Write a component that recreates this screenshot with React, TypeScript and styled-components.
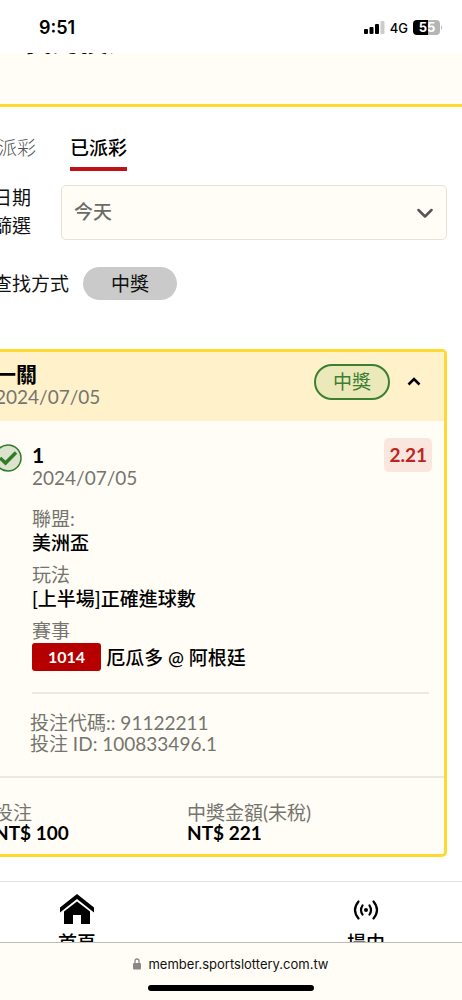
import React from 'react';
import styled, { createGlobalStyle } from 'styled-components';

const GlobalStyle = createGlobalStyle`
  *, *::before, *::after { box-sizing: border-box; }
  body {
    margin: 0;
    background: #fff;
    color: #111;
    font-family: Lato, "Noto Sans CJK TC", sans-serif;
    font-size: 19px;
    line-height: 22px;
    overflow-x: hidden;
  }
  button, select { font: inherit; color: inherit; margin: 0; }
`;

const gray = '#757570';
const cream = '#fffdf5';
const yellow = '#ffd92f';
const line = '#ebe9e3';

const Screen = styled.div`
  overflow: hidden;
`;

const StatusBar = styled.div`
  display: flex;
  align-items: center;
  justify-content: space-between;
  height: 53px;
  padding: 2px 19px 0 39px;
  font-family: Inter, sans-serif;
  color: #000;
`;

const Clock = styled.time`
  font-size: 18px;
  font-weight: 600;
`;

const Signals = styled.div`
  display: flex;
  align-items: center;
  gap: 5px;
  font-size: 13px;
  font-weight: 500;
`;

const TitleBar = styled.header`
  height: 54px;
  overflow: hidden;
  background: ${cream};
  border-bottom: 3px solid ${yellow};
`;

const Title = styled.h1`
  margin: -30px 0 0 24px;
  font-size: 28px;
  line-height: 36px;
  font-weight: 400;
`;

const Page = styled.main`
  margin-left: -22px;
  padding-right: 15px;
`;

const Tabs = styled.div`
  display: flex;
  gap: 34px;
  padding: 27px 0 0 1px;
`;

const Tab = styled.button<{ $active?: boolean }>`
  padding: 0 0 5px;
  border: 0;
  border-bottom: 4px solid ${p => (p.$active ? '#bf1118' : 'transparent')};
  background: none;
  line-height: 28px;
  font-weight: ${p => (p.$active ? 500 : 300)};
  color: ${p => (p.$active ? '#000' : '#555')};
`;

const FilterRow = styled.div<{ $gap: number; $space: number }>`
  display: flex;
  align-items: center;
  gap: ${p => p.$gap}px;
  margin-top: ${p => p.$space}px;
  padding-left: 15px;
`;

const FilterLabel = styled.label`
  width: 38px;
  flex: none;
  line-height: 28px;
`;

const SelectBox = styled.div`
  position: relative;
  flex: 1;
  svg {
    position: absolute;
    right: 14px;
    top: 20px;
    pointer-events: none;
  }
`;

const Select = styled.select`
  display: block;
  width: 100%;
  height: 55px;
  padding: 0 12px;
  appearance: none;
  border: 1px solid #e6e2d6;
  border-radius: 5px;
  background: ${cream};
  color: #6b6b68;
  font-weight: 500;
`;

const Chip = styled.button`
  height: 33px;
  padding: 0 28px;
  border: 0;
  border-radius: 17px;
  background: #cacaca;
`;

const Card = styled.section`
  margin-top: 49px;
  border: 3px solid ${yellow};
  border-radius: 5px;
  background: ${cream};
`;

const CardHead = styled.div`
  display: flex;
  align-items: flex-start;
  padding: 10px 23px 13px 14px;
  background: #fff1ca;
`;

const Grow = styled.div`
  flex: 1;
`;

const Strong = styled.div`
  font-size: 21px;
  line-height: 24px;
  font-weight: 700;
  color: #000;
`;

const Muted = styled.div<{ $line?: number }>`
  color: ${gray};
  line-height: ${p => p.$line ?? 22}px;
`;

const HeadActions = styled.div`
  display: flex;
  align-items: center;
  gap: 17px;
  margin-top: 2px;
`;

const WonBadge = styled.span`
  height: 36px;
  padding: 0 17px;
  border: 2px solid #3d7f31;
  border-radius: 18px;
  background: #ebe8b9;
  color: #3d7f31;
  line-height: 32px;
`;

const Toggle = styled.button`
  display: flex;
  padding: 0;
  border: 0;
  background: none;
`;

const CardBody = styled.div`
  display: flex;
  align-items: flex-start;
  gap: 10px;
  padding: 22px 12px 22px 13px;
  border-bottom: 2px solid ${line};
`;

const Details = styled.div`
  flex: 1;
`;

const SelectionHead = styled.div`
  display: flex;
  align-items: flex-start;
  margin-bottom: 18px;
`;

const Odds = styled.span`
  margin-top: -5px;
  padding: 0 5px;
  border-radius: 5px;
  background: #f8e6df;
  color: #bd261f;
  font-weight: 700;
  line-height: 34px;
`;

const Field = styled.div`
  margin-bottom: 9px;
`;

const Value = styled.div`
  display: flex;
  align-items: center;
  gap: 5px;
  margin-top: 1px;
  line-height: 23px;
  font-weight: 500;
  color: #000;
`;

const Code = styled.span`
  padding: 0 16px;
  border-radius: 3px;
  background: #b60000;
  color: #fff;
  font-size: 16px;
  font-weight: 700;
  line-height: 28px;
`;

const Divider = styled.hr`
  height: 2px;
  margin: 21px 3px 18px 0;
  border: 0;
  background: ${line};
`;

const Meta = styled.div`
  margin-left: -2px;
`;

const Totals = styled.div`
  display: flex;
  padding: 25px 13px 11px;
`;

const Total = styled.div`
  flex: 0 0 193px;
`;

const Amount = styled.div`
  line-height: 20px;
  font-weight: 700;
  color: #000;
`;

const BottomNav = styled.nav`
  display: flex;
  justify-content: space-between;
  height: 61px;
  margin-top: 24px;
  padding: 10px 76px 0 57px;
  border-top: 1px solid #e2e2e2;
  overflow: hidden;
`;

const NavLink = styled.a`
  display: flex;
  flex-direction: column;
  align-items: center;
  gap: 4px;
  width: 40px;
  color: #000;
  text-decoration: none;
  font-weight: 500;
  svg { flex: none; }
`;

const AddressBar = styled.footer`
  height: 58px;
  padding-top: 10px;
  border-top: 1px solid #bdbdb8;
  background: ${cream};
`;

const Address = styled.div`
  display: flex;
  align-items: center;
  justify-content: center;
  gap: 7px;
  font-family: Inter, sans-serif;
  font-size: 13px;
`;

const HomeBar = styled.div`
  width: 36%;
  height: 6px;
  margin: 10px auto 0;
  border-radius: 3px;
  background: #000;
`;

export default function App() {
  return (
    <Screen>
      <GlobalStyle />
      <StatusBar>
        <Clock>9:51</Clock>
        <Signals>
          <svg width="21" height="13" viewBox="0 0 21 13" aria-hidden="true">
            <rect x="0" y="8" width="4" height="5" rx="1" />
            <rect x="5.500" y="6" width="4" height="7" rx="1" />
            <rect x="11" y="3" width="4" height="10" rx="1" />
            <rect x="16.500" y="0" width="4" height="13" rx="1" fill="#ccc" />
          </svg>
          4G
          <svg width="30" height="15" viewBox="0 0 30 15" role="img" aria-label="55%">
            <path d="M4 0H15V15H4Q0 15 0 11V4Q0 0 4 0Z" />
            <path d="M15 0H23Q27 0 27 4V11Q27 15 23 15H15Z" fill="#b5b5b5" />
            <path d="M28 5Q30 7.500 28 10Z" fill="#b5b5b5" />
            <text x="14" y="12" fill="#fff" fontFamily="Inter" fontSize="13" fontWeight="700" textAnchor="middle">55</text>
          </svg>
        </Signals>
      </StatusBar>
      <TitleBar>
        <Title>我的投注</Title>
      </TitleBar>
      <Page>
        <Tabs role="tablist">
          <Tab role="tab" aria-selected="false">未派彩</Tab>
          <Tab role="tab" aria-selected="true" $active>已派彩</Tab>
        </Tabs>
        <FilterRow $gap={30} $space={13}>
          <FilterLabel htmlFor="date">日期篩選</FilterLabel>
          <SelectBox>
            <Select id="date" defaultValue="today">
              <option value="today">今天</option>
            </Select>
            <svg width="16" height="16" viewBox="0 0 16 16" fill="none" stroke="#555" strokeWidth="2.500" strokeLinecap="round" strokeLinejoin="round" aria-hidden="true">
              <path d="M1.500 5L8 11.500L14.500 5" />
            </svg>
          </SelectBox>
        </FilterRow>
        <FilterRow $gap={14} $space={27}>
          <span>查找方式</span>
          <Chip>中獎</Chip>
        </FilterRow>

        <Card>
          <CardHead>
            <Grow>
              <Strong>一關</Strong>
              <Muted>2024/07/05</Muted>
            </Grow>
            <HeadActions>
              <WonBadge>中獎</WonBadge>
              <Toggle aria-label="收合">
                <svg width="14" height="10" viewBox="0 0 14 10" fill="none" stroke="#000" strokeWidth="2.600" aria-hidden="true">
                  <path d="M1.500 7.500L7 2L12.500 7.500" />
                </svg>
              </Toggle>
            </HeadActions>
          </CardHead>
          <CardBody>
            <svg width="28" height="30" viewBox="0 0 28 30" fill="none" stroke="#317a27" aria-hidden="true">
              <circle cx="14" cy="15" r="13" fill="#d9e3cd" strokeWidth="1.500" />
              <path d="M6 15L11.500 20L22 9.500" strokeWidth="3.500" />
            </svg>
            <Details>
              <SelectionHead>
                <Grow>
                  <Strong>1</Strong>
                  <Muted>2024/07/05</Muted>
                </Grow>
                <Odds>2.21</Odds>
              </SelectionHead>
              <Field>
                <Muted $line={23}>聯盟:</Muted>
                <Value>美洲盃</Value>
              </Field>
              <Field>
                <Muted $line={23}>玩法</Muted>
                <Value>[上半場]正確進球數</Value>
              </Field>
              <Muted $line={23}>賽事</Muted>
              <Value><Code>1014</Code>厄瓜多 @ 阿根廷</Value>
              <Divider />
              <Meta>
                <Muted $line={21}>投注代碼:: 91122211</Muted>
                <Muted $line={21}>投注 ID: 100833496.1</Muted>
              </Meta>
            </Details>
          </CardBody>
          <Totals>
            <Total>
              <Muted $line={20}>投注</Muted>
              <Amount>NT$ 100</Amount>
            </Total>
            <div>
              <Muted $line={20}>中獎金額(未稅)</Muted>
              <Amount>NT$ 221</Amount>
            </div>
          </Totals>
        </Card>
      </Page>
      <BottomNav>
        <NavLink href="#home">
          <svg width="34" height="36" viewBox="0 0 34 36" aria-hidden="true">
            <path d="M0 15.500L17 2L34 15.500V20.500L17 7L0 20.500Z" />
            <path d="M4 19.500L17 9.500L30 19.500V32H21V23H13V32H4Z" />
          </svg>
          首頁
        </NavLink>
        <NavLink href="#live">
          <svg width="26" height="36" viewBox="0 0 26 36" fill="none" stroke="#000" strokeWidth="2.200" strokeLinecap="round" aria-hidden="true">
            <circle cx="13" cy="18" r="2" fill="#000" stroke="none" />
            <path d="M9.500 13.500Q6.500 18 9.500 22.500M16.500 13.500Q19.500 18 16.500 22.500M5.500 9.500Q-1.500 18 5.500 26.500M20.500 9.500Q27.500 18 20.500 26.500" />
          </svg>
          場中
        </NavLink>
      </BottomNav>
      <AddressBar>
        <Address>
          <svg width="8" height="12" viewBox="0 0 8 12" aria-hidden="true">
            <rect x="0" y="5" width="8" height="6.500" rx="1" fill="#888" />
            <path d="M2 5V3Q2 1 4 1T6 3V5" fill="none" stroke="#888" strokeWidth="1.300" />
          </svg>
          member.sportslottery.com.tw
        </Address>
        <HomeBar />
      </AddressBar>
    </Screen>
  );
}
